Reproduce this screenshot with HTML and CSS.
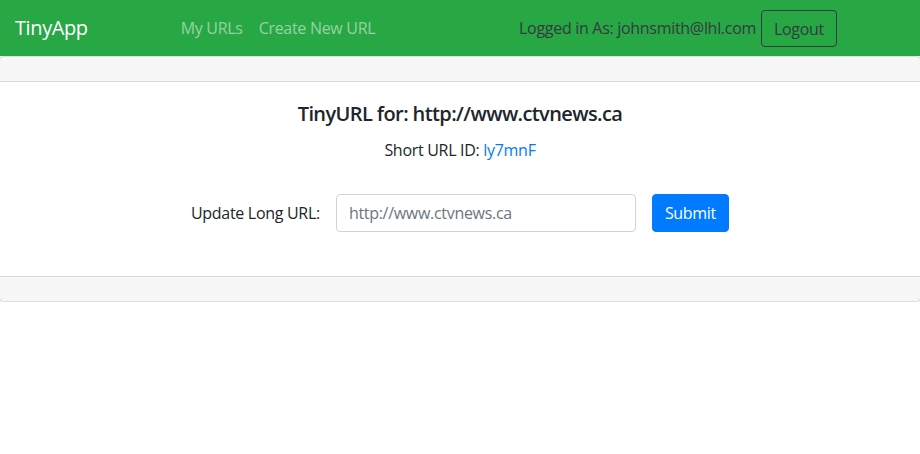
FILE: index.html
```html
<!DOCTYPE html>
<html lang="en">
<head>
<meta charset="utf-8">
<title>TinyApp</title>
<link rel="stylesheet" href="styles.css">
</head>
<body>
<nav class="navbar">
  <a class="brand" href="#">TinyApp</a>
  <div class="nav-links">
    <a class="nav-link" href="#">My URLs</a>
    <a class="nav-link" href="#">Create New URL</a>
  </div>
  <div class="user">
    <span class="user-text">Logged in As: johnsmith@lhl.com</span>
    <button class="btn-logout" type="button">Logout</button>
  </div>
</nav>
<main class="card">
  <div class="card-header"></div>
  <div class="card-body">
    <h5 class="card-title">TinyURL for: http://www.ctvnews.ca</h5>
    <p class="card-text">Short URL ID: <a class="short-link" href="#">ly7mnF</a></p>
    <form class="update-form">
      <label class="form-label" for="longURL">Update Long URL:</label>
      <input class="form-input" id="longURL" type="text" placeholder="http://www.ctvnews.ca">
      <button class="btn-submit" type="submit">Submit</button>
    </form>
  </div>
  <div class="card-footer"></div>
</main>
</body>
</html>
```
FILE: styles.css
```css
* { box-sizing: border-box; }
body {
  margin: 0;
  font-family: "Open Sans", "Noto Sans", sans-serif;
  font-size: 16px;
  line-height: 1.5;
  letter-spacing: -0.3px;
  color: #212529;
  background: #fff;
}
a { text-decoration: none; }

.navbar {
  height: 56px;
  background: #28a745;
  display: flex;
  align-items: center;
  padding: 0 16px 0 15px;
}
.brand {
  color: #fff;
  font-size: 20px;
  line-height: 30px;
  letter-spacing: -0.4px;
}
.nav-links {
  display: flex;
  margin-left: 85px;
}
.nav-link {
  color: rgba(255, 255, 255, 0.5);
  padding: 8px 8px;
}
.user {
  margin-left: auto;
  margin-right: 67px;
  display: flex;
  align-items: center;
  gap: 5px;
}
.user-text { color: #343a40; }
.btn-logout {
  font: inherit;
  letter-spacing: inherit;
  color: #343a40;
  background: transparent;
  border: 1px solid #343a40;
  border-radius: 4px;
  padding: 6px 12px;
  height: 37px;
  line-height: 24px;
  margin-top: 1px;
}

.card {
  display: block;
  margin: 0 -1px;
  border: 1px solid rgba(0, 0, 0, 0.125);
  border-radius: 4px;
}
.card-header {
  height: 25px;
  background: rgba(0, 0, 0, 0.03);
  border-bottom: 1px solid rgba(0, 0, 0, 0.125);
}
.card-body {
  padding: 20px;
  text-align: center;
}
.card-title {
  margin: 0 0 12px;
  font-size: 20px;
  font-weight: 600;
  line-height: 24px;
  letter-spacing: -0.6px;
}
.card-text {
  margin: 0 0 32px;
  line-height: 24px;
}
.short-link { color: #007bff; }
.update-form {
  display: flex;
  justify-content: center;
  align-items: center;
  gap: 16px;
  margin-bottom: 24px;
}
.form-label { line-height: 24px; }
.form-input {
  width: 300px;
  height: 38px;
  padding: 6px 12px;
  font: inherit;
  letter-spacing: inherit;
  color: #495057;
  border: 1px solid #ced4da;
  border-radius: 4px;
}
.form-input::placeholder { color: #6c757d; opacity: 1; }
.btn-submit {
  font: inherit;
  letter-spacing: inherit;
  height: 38px;
  padding: 6px 12px;
  color: #fff;
  background: #007bff;
  border: 1px solid #007bff;
  border-radius: 4px;
}
.card-footer {
  height: 25px;
  background: rgba(0, 0, 0, 0.03);
  border-top: 1px solid rgba(0, 0, 0, 0.125);
}
```
